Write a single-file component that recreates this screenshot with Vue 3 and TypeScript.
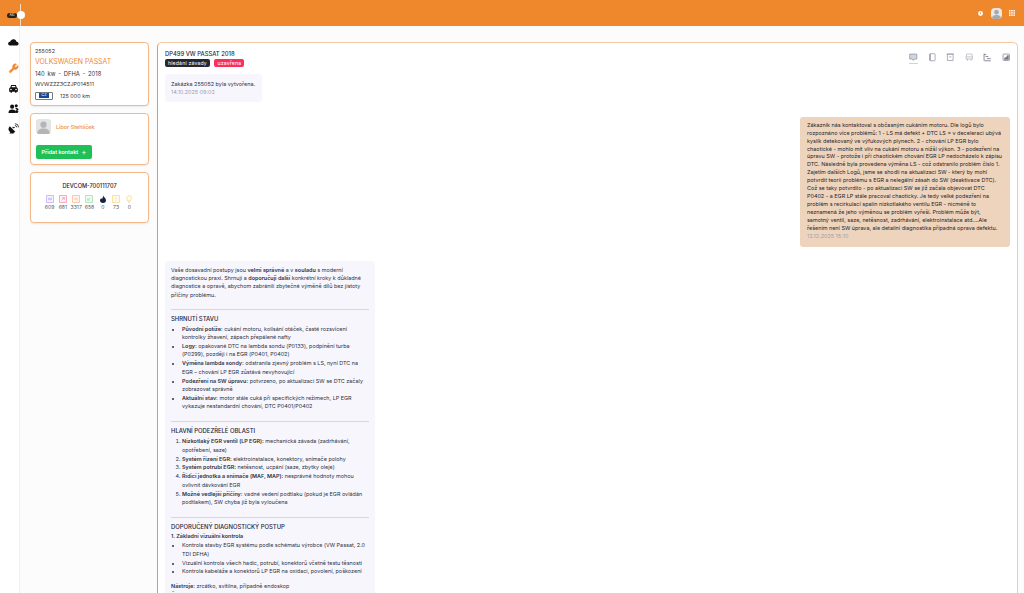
<template>
  <div class="page">
    <header class="topbar">
      <div class="rail-toggle">
        <span class="pill">AID</span>
        <span class="knob"></span>
      </div>
      <div class="top-right">
        <svg class="bell" viewBox="0 0 10 10"><circle cx="5" cy="5" r="3.5" fill="#fff" /><rect x="4.5" y="3" width="1" height="3" fill="#f0872c" /></svg>
        <span class="top-avatar">
          <svg viewBox="0 0 24 24"><circle cx="12" cy="9" r="5" fill="#a9a9ab" /><path d="M2 24c0-7 4-9 10-9s10 2 10 9z" fill="#a9a9ab" /></svg>
        </span>
        <svg class="apps" viewBox="0 0 6 6"><g fill="#fff"><rect x="0" y="0" width="1.5" height="1.5" /><rect x="2.2" y="0" width="1.5" height="1.5" /><rect x="4.4" y="0" width="1.5" height="1.5" /><rect x="0" y="2.2" width="1.5" height="1.5" /><rect x="2.2" y="2.2" width="1.5" height="1.5" /><rect x="4.4" y="2.2" width="1.5" height="1.5" /><rect x="0" y="4.4" width="1.5" height="1.5" /><rect x="2.2" y="4.4" width="1.5" height="1.5" /><rect x="4.4" y="4.4" width="1.5" height="1.5" /></g></svg>
      </div>
    </header>

    <div class="body">
      <nav class="rail">
        <svg viewBox="0 0 24 24"><path d="M4 18.5a4 4 0 0 1 .5-8C6 6 10 4 13.5 5c3 1 4.5 3 5 5.5a4 4 0 0 1 1 8z" fill="#111" /></svg>
        <svg class="wrench" viewBox="0 0 24 24"><path d="M14.7 6.3a1 1 0 0 0 0 1.4l1.6 1.6a1 1 0 0 0 1.4 0l3.77-3.77a6 6 0 0 1-7.94 7.94l-6.91 6.91a2.12 2.12 0 0 1-3-3l6.91-6.91a6 6 0 0 1 7.94-7.94z" fill="#ee8a37" stroke="#ee8a37" stroke-width="1.5" stroke-linejoin="round" /></svg>
        <svg viewBox="0 0 24 24"><path d="M5 10l1.8-5.5h10.4L19 10a3 3 0 0 1 2.5 3v6h-3v2.5h-3V19h-7v2.5h-3V19h-3v-6A3 3 0 0 1 5 10zm2.5-.5h9l-1-3h-7zM6.5 16a1.7 1.7 0 1 0 0-3.400 1.7 1.7 0 0 0 0 3.400zm11 0a1.7 1.7 0 1 0 0-3.400 1.7 1.7 0 0 0 0 3.400z" fill="#111" fill-rule="evenodd" /></svg>
        <svg viewBox="0 0 24 24"><g fill="#111"><circle cx="9" cy="8" r="4.5" /><path d="M1 22c0-6 3-8 8-8s8 2 8 8z" /><circle cx="18" cy="6" r="3.3" /><path d="M17 10.5c4 0 6 2 6 5h-4c-.5-2-1.500-3.500-4-4z" /><circle cx="19" cy="18.5" r="3.5" /></g></svg>
        <svg viewBox="0 0 24 24"><g fill="#111"><path d="M4 7l12 12A8 8 0 0 1 4 7z" /><path d="M8 16l-5 7h10z" /><circle cx="13" cy="10" r="1.7" /><path d="M9 8l4 2-2 2z" /></g><path d="M15 5.5a4 4 0 0 1 4 4M15 1.5a8 8 0 0 1 8 8" fill="none" stroke="#111" stroke-width="1.7" /></svg>
      </nav>

      <aside class="side">
        <section class="card vehicle">
          <div class="v-id">255052</div>
          <div class="v-name">VOLKSWAGEN PASSAT</div>
          <div class="v-spec">140 kw - DFHA - 2018</div>
          <div class="v-vin">WVWZZZ3CZJP014511</div>
          <div class="v-plate">
            <span class="plate"><span>CZ</span></span>
            <span>125 000 km</span>
          </div>
        </section>

        <section class="card contact">
          <div class="person">
            <span class="avatar">
              <svg viewBox="0 0 24 24"><circle cx="12" cy="9" r="5" fill="#b5b5b7" /><path d="M2 24c0-7 4-9 10-9s10 2 10 9z" fill="#b5b5b7" /></svg>
            </span>
            <span class="person-name">Libor Stehlíček</span>
          </div>
          <button class="add-btn">Přidat kontakt <b>+</b></button>
        </section>

        <section class="card device">
          <div class="dev-name">DEVCOM-700111707</div>
          <div class="stats">
            <div v-for="s in stats" :key="s.color" class="stat">
              <svg viewBox="0 0 12 12">
                <template v-if="s.kind === 'box'">
                  <rect x="0.7" y="0.7" width="10.6" height="10.6" rx="0.5" :fill="s.tint" :stroke="s.color" stroke-width="1" />
                  <path :d="s.mark" fill="none" :stroke="s.color" stroke-width="0.9" />
                </template>
                <path v-else-if="s.kind === 'fire'" d="M6 .5c.5 2.500 4.500 4 4.500 7.500a4.500 4 0 0 1-9 0c0-1.500.8-2.500 1.700-3.300L4.500 6C5.500 4.500 6.300 3 6 .5z" fill="#17233f" />
                <path v-else d="M6 1a3.500 3.500 0 0 1 2 6.400V9H4V7.400A3.500 3.500 0 0 1 6 1zM4.500 10.800h3" fill="none" :stroke="s.color" stroke-width="1" />
              </svg>
              <span>{{ s.value }}</span>
            </div>
          </div>
        </section>
      </aside>

      <main class="panel">
        <div class="panel-head">
          <div>
            <h1>DP499 VW PASSAT 2018</h1>
            <div class="tags">
              <span class="tag dark">hledání závady</span>
              <span class="tag red">uzavřena</span>
            </div>
          </div>
          <div class="tabs">
            <span class="tab active"><svg viewBox="0 0 12 12"><path d="M1 1.5h10v7H7.5L6 10.5 4.5 8.5H1z" fill="#d3d5dd" stroke="#8a8f9e" stroke-width="1" /></svg></span>
            <span class="tab"><svg viewBox="0 0 12 12"><rect x="2.5" y="1" width="7.5" height="10" rx="1" fill="none" stroke="#8a8f9e" stroke-width="1" /><path d="M3 1.5v9" stroke="#8a8f9e" stroke-width="1.5" /></svg></span>
            <span class="tab"><svg viewBox="0 0 12 12"><path d="M1 1.5h10M2 1.5h8v9H2zM4.5 5.5h3" fill="none" stroke="#8a8f9e" stroke-width="1" /></svg></span>
            <span class="tab"><svg viewBox="0 0 12 12"><path d="M2.500 1.5h7l1 4v3h-9v-3zM3.5 8.5v2.500M8.5 8.5v2.500M2 5.5h8" fill="none" stroke="#a9adb8" stroke-width="1" /></svg></span>
            <span class="tab"><svg viewBox="0 0 12 12"><path d="M1.5 1v10M1.5 2h3M3.5 5h4M5.5 8h5.500M2 11h9" fill="none" stroke="#767b8b" stroke-width="1.2" /></svg></span>
            <span class="tab"><svg viewBox="0 0 12 12"><rect x="1.5" y="1.5" width="9" height="9" rx="1" fill="none" stroke="#767b8b" stroke-width="1" /><path d="M3 9.5V7l3-1.500L7.500 3h2v6.500z" fill="#767b8b" /></svg></span>
          </div>
        </div>

        <div class="bubble in first">
          <p>Zakázka 255052 byla vytvořena.</p>
          <time>14.10.2025 09:02</time>
        </div>

        <div class="bubble out">
          <p>Zákazník nás kontaktoval s občasným cukáním motoru. Dle logů bylo rozpoznáno více problémů: 1 - LS má defekt + DTC LS = v deceleraci ubývá kyslík detekovaný ve výfukových plynech. 2 - chování LP EGR bylo chaotické - mohlo mít vliv na cukání motoru a nižší výkon. 3 - podezření na úpravu SW - protože i při chaotickém chování EGR LP nedocházelo k zápisu DTC. Následně byla provedena výměna LS - což odstranilo problém číslo 1. Zajetím dalších Logů, jsme se shodli na aktualizaci SW - který by mohl potvrdit teorii problému s EGR a nelegální zásah do SW (deaktivace DTC). Což se taky potvrdilo - po aktualizaci SW se již začala objevovat DTC P0402 - a EGR LP stále pracoval chaoticky. Je tedy velké podezření na problém s recirkulací spalin nízkotlakého ventilu EGR - nicméně to neznamená že jeho výměnou se problém vyřeší. Problém může být, samotný ventil, saze, netěsnost, zadrhávání, elektroinstalace atd....Ale řešením není SW úprava, ale detailní diagnostika případná oprava defektu.</p>
          <time>12.12.2025 15:10</time>
        </div>

        <div class="bubble in reply">
          <p class="intro">Vaše dosavadní postupy jsou <b>velmi správné</b> a v <b>souladu</b> s moderní diagnostickou praxí. Shrnuji a <b>doporučuji další</b> konkrétní kroky k důkladné diagnostice a opravě, abychom zabránili zbytečné výměně dílů bez jistoty příčiny problému.</p>
          <hr />
          <h3>SHRNUTÍ STAVU</h3>
          <ul>
            <li><b>Původní potíže:</b> cukání motoru, kolísání otáček, časté rozsvícení kontrolky žhavení, zápach přepálené nafty</li>
            <li><b>Logy:</b> opakované DTC na lambda sondu (P0133), podpínění turba (P0299), později i na EGR (P0401, P0402)</li>
            <li><b>Výměna lambda sondy:</b> odstranila zjevný problém s LS, nyní DTC na EGR – chování LP EGR zůstává nevyhovující</li>
            <li><b>Podezření na SW úpravu:</b> potvrzeno, po aktualizaci SW se DTC začaly zobrazovat správně</li>
            <li><b>Aktuální stav:</b> motor stále cuká při specifických režimech, LP EGR vykazuje nestandardní chování, DTC P0401/P0402</li>
          </ul>
          <hr />
          <h3>HLAVNÍ PODEZŘELÉ OBLASTI</h3>
          <ol>
            <li><b>Nízkotlaký EGR ventil (LP EGR):</b> mechanická závada (zadrhávání, opotřebení, saze)</li>
            <li><b>Systém řízení EGR:</b> elektroinstalace, konektory, snímače polohy</li>
            <li><b>Systém potrubí EGR:</b> netěsnost, ucpání (saze, zbytky oleje)</li>
            <li><b>Řídicí jednotka a snímače (MAF, MAP):</b> nesprávné hodnoty mohou ovlivnit dávkování EGR</li>
            <li><b>Možné vedlejší příčiny:</b> vadné vedení podtlaku (pokud je EGR ovládán podtlakem), SW chyba již byla vyloučena</li>
          </ol>
          <hr />
          <h3>DOPORUČENÝ DIAGNOSTICKÝ POSTUP</h3>
          <h4>1. Základní vizuální kontrola</h4>
          <ul class="checks">
            <li>Kontrola stavby EGR systému podle schématu výrobce (VW Passat, 2.0 TDI DFHA)</li>
            <li>Vizuální kontrola všech hadic, potrubí, konektorů včetně testu těsnosti</li>
            <li>Kontrola kabeláže a konektorů LP EGR na oxidaci, povolení, poškození</li>
          </ul>
          <p class="tools"><b>Nástroje:</b> zrcátko, svítilna, případně endoskop</p>
          <p class="tools"><b>Čas:</b> 20–30 min</p>
        </div>
      </main>
    </div>
  </div>
</template>

<script setup lang="ts">
interface Stat {
  kind: 'box' | 'fire' | 'bulb'
  color: string
  tint: string
  mark: string
  value: number
}

const stats: Stat[] = [
  { kind: 'box', color: '#b59af0', tint: '#f6f2fe', mark: 'M3 5h6M3 7h6', value: 609 },
  { kind: 'box', color: '#ef7f98', tint: '#fef0f3', mark: 'M4 8l4-4M5 4h3v3', value: 681 },
  { kind: 'box', color: '#f4b183', tint: '#fef5ee', mark: 'M3 6h5M6 4l2 2-2 2', value: 3317 },
  { kind: 'box', color: '#8fd79f', tint: '#f0fbf2', mark: 'M8 4L4 8M4 5v3h3', value: 658 },
  { kind: 'fire', color: '#17233f', tint: '', mark: '', value: 0 },
  { kind: 'box', color: '#f3d27a', tint: '#fefaee', mark: 'M6 3.5v3M6 7.5v1', value: 73 },
  { kind: 'bulb', color: '#f5cf5c', tint: '', mark: '', value: 0 }
]
</script>

<style>
html,
body {
  margin: 0;
  background: #fcfcfc;
  overflow: hidden;
}
</style>

<style scoped>
.page {
  height: 593px;
  overflow: hidden;
  font-family: Inter, "Noto Sans", sans-serif;
  font-size: 5.45px;
  color: #2c3140;
  display: flex;
  flex-direction: column;
}

.topbar {
  height: 26px;
  flex: none;
  background: #ef872d;
  display: flex;
  justify-content: space-between;
  align-items: center;
  position: relative;
}

.rail-toggle {
  position: absolute;
  left: 7px;
  top: 4px;
  display: flex;
  align-items: center;
  height: 22px;
}

.rail-toggle::after {
  content: "";
  position: absolute;
  left: 13px;
  top: 0;
  width: 1px;
  height: 22px;
  background: rgba(255, 255, 255, 0.7);
}

.pill {
  width: 10px;
  height: 5px;
  border-radius: 3px;
  background: #222;
  color: #fff;
  font-size: 3px;
  line-height: 5px;
  text-align: center;
}

.knob {
  width: 8px;
  height: 8px;
  margin-left: -0.5px;
  border-radius: 50%;
  background: #fff;
  position: relative;
  z-index: 1;
}

.top-right {
  margin-left: auto;
  margin-right: 9px;
  display: flex;
  align-items: center;
}

.bell {
  width: 7px;
  height: 7px;
  margin-right: 7.5px;
}

.top-avatar {
  width: 11px;
  height: 11px;
  border-radius: 4px;
  background: #e9e9ea;
  overflow: hidden;
  margin-right: 7px;
  display: flex;
}

.apps {
  width: 6px;
  height: 6px;
}

.body {
  flex: 1;
  display: flex;
  min-height: 0;
}

.rail {
  width: 20px;
  flex: none;
  margin-right: 10px;
  padding: 11px 0 0 7px;
  background: #fff;
  border-right: 1px solid #f1f1f1;
  box-sizing: border-box;
  display: flex;
  flex-direction: column;
  align-items: center;
  gap: 9px;
}

.rail svg {
  width: 11px;
  height: 11px;
}

.rail .wrench {
  margin-top: 6px;
}

.side {
  width: 119px;
  flex: none;
  padding-top: 16px;
  display: flex;
  flex-direction: column;
  gap: 7px;
}

.card {
  box-sizing: border-box;
  background: #fff;
  border: 1px solid #f5b888;
  border-radius: 4px;
  box-shadow: 0 1px 2px rgba(0, 0, 0, 0.08);
}

.vehicle {
  height: 64px;
  padding: 4px 4px;
  line-height: 8px;
  color: #333;
}

.v-name {
  color: #ee8a37;
  font-size: 6.9px;
  line-height: 10px;
  margin-top: 1.5px;
}

.v-spec {
  font-size: 5.8px;
  word-spacing: 1.2px;
  margin-top: 3.5px;
}

.v-vin {
  margin-top: 2px;
}

.v-plate {
  display: flex;
  align-items: center;
  gap: 7px;
  margin-top: 3.5px;
}

.plate {
  width: 18px;
  height: 8px;
  box-sizing: border-box;
  background: #fff;
  border: 1px solid #777;
  border-radius: 1px;
  display: flex;
  justify-content: center;
  align-items: center;
}

.plate span {
  background: #144a9c;
  color: #fff;
  font-size: 4px;
  line-height: 4.5px;
  padding: 0 2.5px;
}

.contact {
  height: 52px;
  padding: 5px;
}

.person {
  display: flex;
  align-items: center;
  gap: 5px;
}

.avatar {
  width: 15px;
  height: 15px;
  border-radius: 3px;
  background: #e4e4e5;
  overflow: hidden;
  display: flex;
}

.person-name {
  color: #ee8a37;
  font-weight: 500;
}

.add-btn {
  margin-top: 11px;
  height: 14px;
  width: 56px;
  padding: 0;
  border: 0;
  border-radius: 2px;
  background: #1fc058;
  color: #fff;
  font: inherit;
  font-weight: 600;
  display: flex;
  align-items: center;
  justify-content: center;
  gap: 3px;
}

.add-btn b {
  font-size: 8px;
  font-weight: 400;
  line-height: 8px;
}

.device {
  height: 51px;
  padding-top: 10px;
}

.dev-name {
  text-align: center;
  color: #1c2236;
  font-weight: 500;
  font-size: 5.6px;
  line-height: 7px;
}

.stats {
  margin-top: 4.5px;
  display: flex;
  justify-content: center;
}

.stat {
  flex: 0 0 13.3px;
  min-width: 0;
  display: flex;
  flex-direction: column;
  align-items: center;
  gap: 1px;
  font-size: 5.1px;
  line-height: 6px;
  color: #555a66;
}

.stat svg {
  width: 8px;
  height: 8px;
}

.panel {
  flex: 1;
  box-sizing: border-box;
  margin: 16px 6px 0 8px;
  padding: 7px 7px 0;
  background: #fff;
  border: 1px solid #f5c9a4;
  border-left-color: #f0963f;
  border-bottom: 0;
  border-radius: 5px 5px 0 0;
  overflow: hidden;
  min-width: 0;
}

.panel-head {
  display: flex;
  justify-content: space-between;
  align-items: flex-start;
}

h1 {
  margin: 0;
  font-size: 5.85px;
  line-height: 8px;
  font-weight: 500;
  color: #222a3c;
}

.tags {
  display: flex;
  gap: 4.5px;
  margin-top: 1px;
}

.tag {
  height: 8px;
  line-height: 8px;
  padding: 0 3px;
  border-radius: 2px;
  color: #fff;
  font-size: 5.2px;
  letter-spacing: 0.15px;
}

.dark {
  background: #262733;
}

.red {
  background: #f8305f;
}

.tabs {
  margin-top: 3px;
  display: flex;
  gap: 10px;
}

.tab {
  padding-bottom: 1.5px;
  border-bottom: 1px solid transparent;
}

.tab.active {
  border-bottom-color: #f5c9a4;
}

.tab svg {
  width: 8.5px;
  height: 8.5px;
  display: block;
}

.bubble {
  box-sizing: border-box;
  border-radius: 3px;
}

.bubble p {
  margin: 0;
}

time {
  display: block;
  color: #9a9db5;
}

.in {
  background: #f7f6fd;
  width: 210px;
}

.first {
  width: 97px;
  margin-top: 7px;
  padding: 7px 6px 5px;
  line-height: 7.9px;
}

.out {
  margin: 15px 0 0 auto;
  width: 210px;
  height: 130px;
  padding: 5px 7px;
  background: #eed4bd;
  line-height: 7.9px;
  color: #24242a;
}

.reply {
  margin-top: 14px;
  padding: 5px 6px;
  line-height: 8.3px;
}

.bubble .intro {
  margin-bottom: 10px;
}

hr {
  border: 0;
  height: 1px;
  background: #d6d7de;
  margin: 0;
}

h3 {
  margin: 5px 0 2px;
  font-size: 5.9px;
  line-height: 8px;
  font-weight: 500;
  color: #1f2435;
}

h4 {
  margin: -1px 0 1px;
  font-size: 5.45px;
  font-weight: 600;
  line-height: 8.3px;
}

.reply b {
  font-weight: 600;
}

ul,
ol {
  margin: 0 0 11px;
  padding-left: 11px;
}

li {
  margin-bottom: 0.6px;
}

.checks {
  margin-bottom: 6.5px;
}

.tools {
  margin: 0;
}
</style>
